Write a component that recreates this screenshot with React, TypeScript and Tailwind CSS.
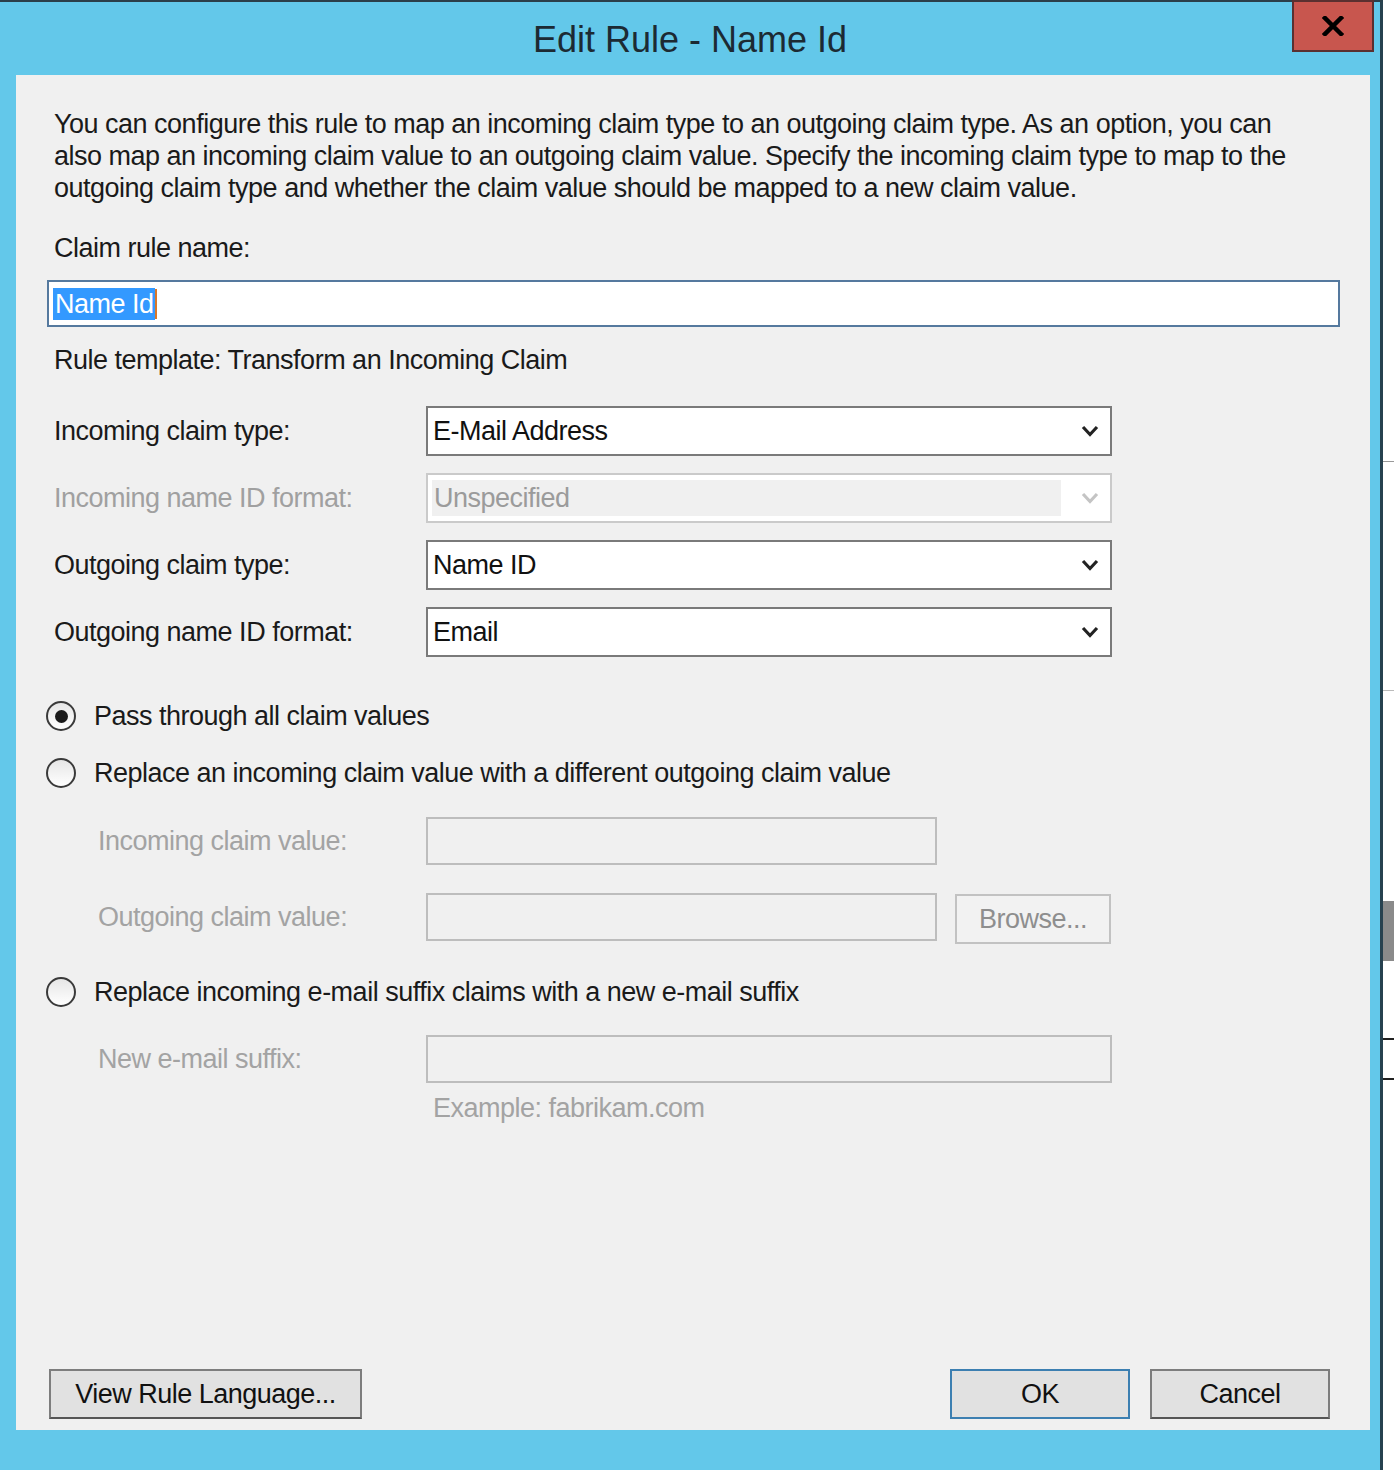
import React from 'react';

const font = { fontFamily: '"Liberation Sans", Arial, sans-serif' };

const txt = 'text-[27px] leading-[32px] tracking-[-0.5px]';

function Chevron({ disabled }: { disabled?: boolean }) {
  return (
    <svg width="18" height="12" viewBox="0 0 18 12" className="shrink-0">
      <polyline
        points="2,2 9,9.5 16,2"
        fill="none"
        stroke={disabled ? '#c4c4c4' : '#222'}
        strokeWidth="3.2"
      />
    </svg>
  );
}

function Combo({ value, disabled }: { value: string; disabled?: boolean }) {
  if (disabled) {
    return (
      <div className="flex h-[50px] w-[686px] items-center border-2 border-[#cacaca] bg-white pl-[4px] pr-[11px]">
        <div className={`flex h-[36px] flex-1 items-center bg-[#f0f0f0] pl-[2px] text-[#9b9b9b] ${txt}`}>
          {value}
        </div>
        <div className="ml-[20px]">
          <Chevron disabled />
        </div>
      </div>
    );
  }
  return (
    <div className="flex h-[50px] w-[686px] items-center justify-between border-2 border-[#7a7a7a] bg-white pl-[5px] pr-[11px] text-[#111]">
      <span className={txt}>{value}</span>
      <Chevron />
    </div>
  );
}

function Row({ label, value, disabled }: { label: string; value: string; disabled?: boolean }) {
  return (
    <div className="flex items-center">
      <div className={`w-[372px] ${txt} ${disabled ? 'text-[#a0a0a0]' : 'text-[#1a1a1a]'}`}>{label}</div>
      <Combo value={value} disabled={disabled} />
    </div>
  );
}

function Radio({ label, checked }: { label: string; checked?: boolean }) {
  return (
    <div className="-ml-[8px] flex h-[32px] items-center gap-[18px]">
      <div className="flex h-[30px] w-[30px] items-center justify-center rounded-full border-2 border-[#3a3a3a] bg-gradient-to-b from-[#e6e6e6] to-white">
        {checked && <div className="h-[13px] w-[13px] rounded-full bg-[#1a1a1a]" />}
      </div>
      <span className={`${txt} text-[#1a1a1a]`}>{label}</span>
    </div>
  );
}

function SubRow({ label, width, children }: { label: string; width: string; children?: React.ReactNode }) {
  return (
    <div className="flex items-center">
      <div className={`ml-[44px] w-[328px] ${txt} text-[#a3a3a3]`}>{label}</div>
      <div className={`h-[48px] ${width} border-2 border-[#bdbdbd] bg-[#f0f0f0]`} />
      {children}
    </div>
  );
}

function Button({ label, w, primary }: { label: string; w: string; primary?: boolean }) {
  return (
    <button
      type="button"
      className={`flex h-[50px] ${w} items-center justify-center border-2 bg-[#e1e1e1] ${txt} text-[#111] ${
        primary ? 'border-[#3c7fb1]' : 'border-[#7d7d7d] border-b-[#555]'
      }`}
    >
      {label}
    </button>
  );
}

export default function App() {
  return (
    <div className="flex h-[1470px] w-[1394px] overflow-hidden bg-[#f3f3f3]" style={font}>
      {/* dialog frame */}
      <div className="flex h-full w-[1383px] flex-col border-r-[3px] border-t-[2px] border-r-[#26414f] border-t-[#2b3f4a] bg-[#63c8ea]">
        {/* title bar */}
        <div className="relative flex h-[73px] shrink-0 items-center justify-center">
          <span className="pt-[2px] text-[36px] text-[#1c2a33]">Edit Rule - Name Id</span>
          <div className="absolute -top-[2px] right-[6px] flex h-[52px] w-[82px] items-center justify-center border-2 border-[#5a3030] bg-[#c8564e]">
            <svg width="22" height="20" viewBox="0 0 22 20">
              <path d="M3 2 L19 18 M19 2 L3 18" stroke="#000" strokeWidth="4.5" strokeLinecap="square" />
            </svg>
          </div>
        </div>

        {/* content panel */}
        <div className="mb-[40px] ml-[16px] mr-[10px] flex flex-1 flex-col bg-[#f0f0f0] pl-[38px] pr-[30px]">
          <p className={`mt-[33px] ${txt} text-[#1a1a1a]`}>
            You can configure this rule to map an incoming claim type to an outgoing claim type. As an option, you can
            <br />
            also map an incoming claim value to an outgoing claim value. Specify the incoming claim type to map to the
            <br />
            outgoing claim type and whether the claim value should be mapped to a new claim value.
          </p>

          <div className={`mt-[28px] ${txt} text-[#1a1a1a]`}>Claim rule name:</div>

          <div className="-ml-[7px] mt-[16px] flex h-[47px] w-[1293px] items-center border-2 border-[#55799e] bg-white pl-[4px]">
            <span className={`bg-[#3399ff] pl-[2px] pr-[1px] text-white ${txt}`}>Name Id</span>
            <span className="h-[30px] w-[2px] bg-[#d9772a]" />
          </div>

          <div className={`mt-[17px] ${txt} text-[#1a1a1a]`}>Rule template: Transform an Incoming Claim</div>

          <div className="mt-[30px] flex flex-col gap-[17px]">
            <Row label="Incoming claim type:" value="E-Mail Address" />
            <Row label="Incoming name ID format:" value="Unspecified" disabled />
            <Row label="Outgoing claim type:" value="Name ID" />
            <Row label="Outgoing name ID format:" value="Email" />
          </div>

          <div className="mt-[43px]">
            <Radio label="Pass through all claim values" checked />
          </div>
          <div className="mt-[25px]">
            <Radio label="Replace an incoming claim value with a different outgoing claim value" />
          </div>

          <div className="mt-[28px] flex flex-col gap-[25px]">
            <SubRow label="Incoming claim value:" width="w-[511px]" />
            <SubRow label="Outgoing claim value:" width="w-[511px]">
              <div
                className={`ml-[18px] mt-[4px] flex h-[50px] w-[156px] items-center justify-center border-2 border-[#c2c2c2] bg-[#f2f2f2] ${txt} text-[#8e8e8e]`}
              >
                Browse...
              </div>
            </SubRow>
          </div>

          <div className="mt-[32px]">
            <Radio label="Replace incoming e-mail suffix claims with a new e-mail suffix" />
          </div>

          <div className="mt-[27px]">
            <SubRow label="New e-mail suffix:" width="w-[686px]" />
          </div>
          <div className={`ml-[379px] mt-[9px] ${txt} text-[#a3a3a3]`}>Example: fabrikam.com</div>

          <div className="mb-[11px] mt-auto flex items-center">
            <div className="-ml-[5px]">
              <Button label="View Rule Language..." w="w-[313px]" />
            </div>
            <div className="ml-auto flex gap-[20px] pr-[10px]">
              <Button label="OK" w="w-[180px]" primary />
              <Button label="Cancel" w="w-[180px]" />
            </div>
          </div>
        </div>
      </div>

      {/* background window edge */}
      <div className="flex h-full flex-1 flex-col bg-white">
        <div className="h-[462px] border-b border-[#999]" />
        <div className="mt-[228px] border-t border-[#bbb]" />
        <div className="mt-[210px] h-[60px] bg-[#8a8a8a]" />
        <div className="mt-[77px] border-t-2 border-[#222]" />
        <div className="mt-[38px] border-t-2 border-[#222]" />
      </div>
    </div>
  );
}
